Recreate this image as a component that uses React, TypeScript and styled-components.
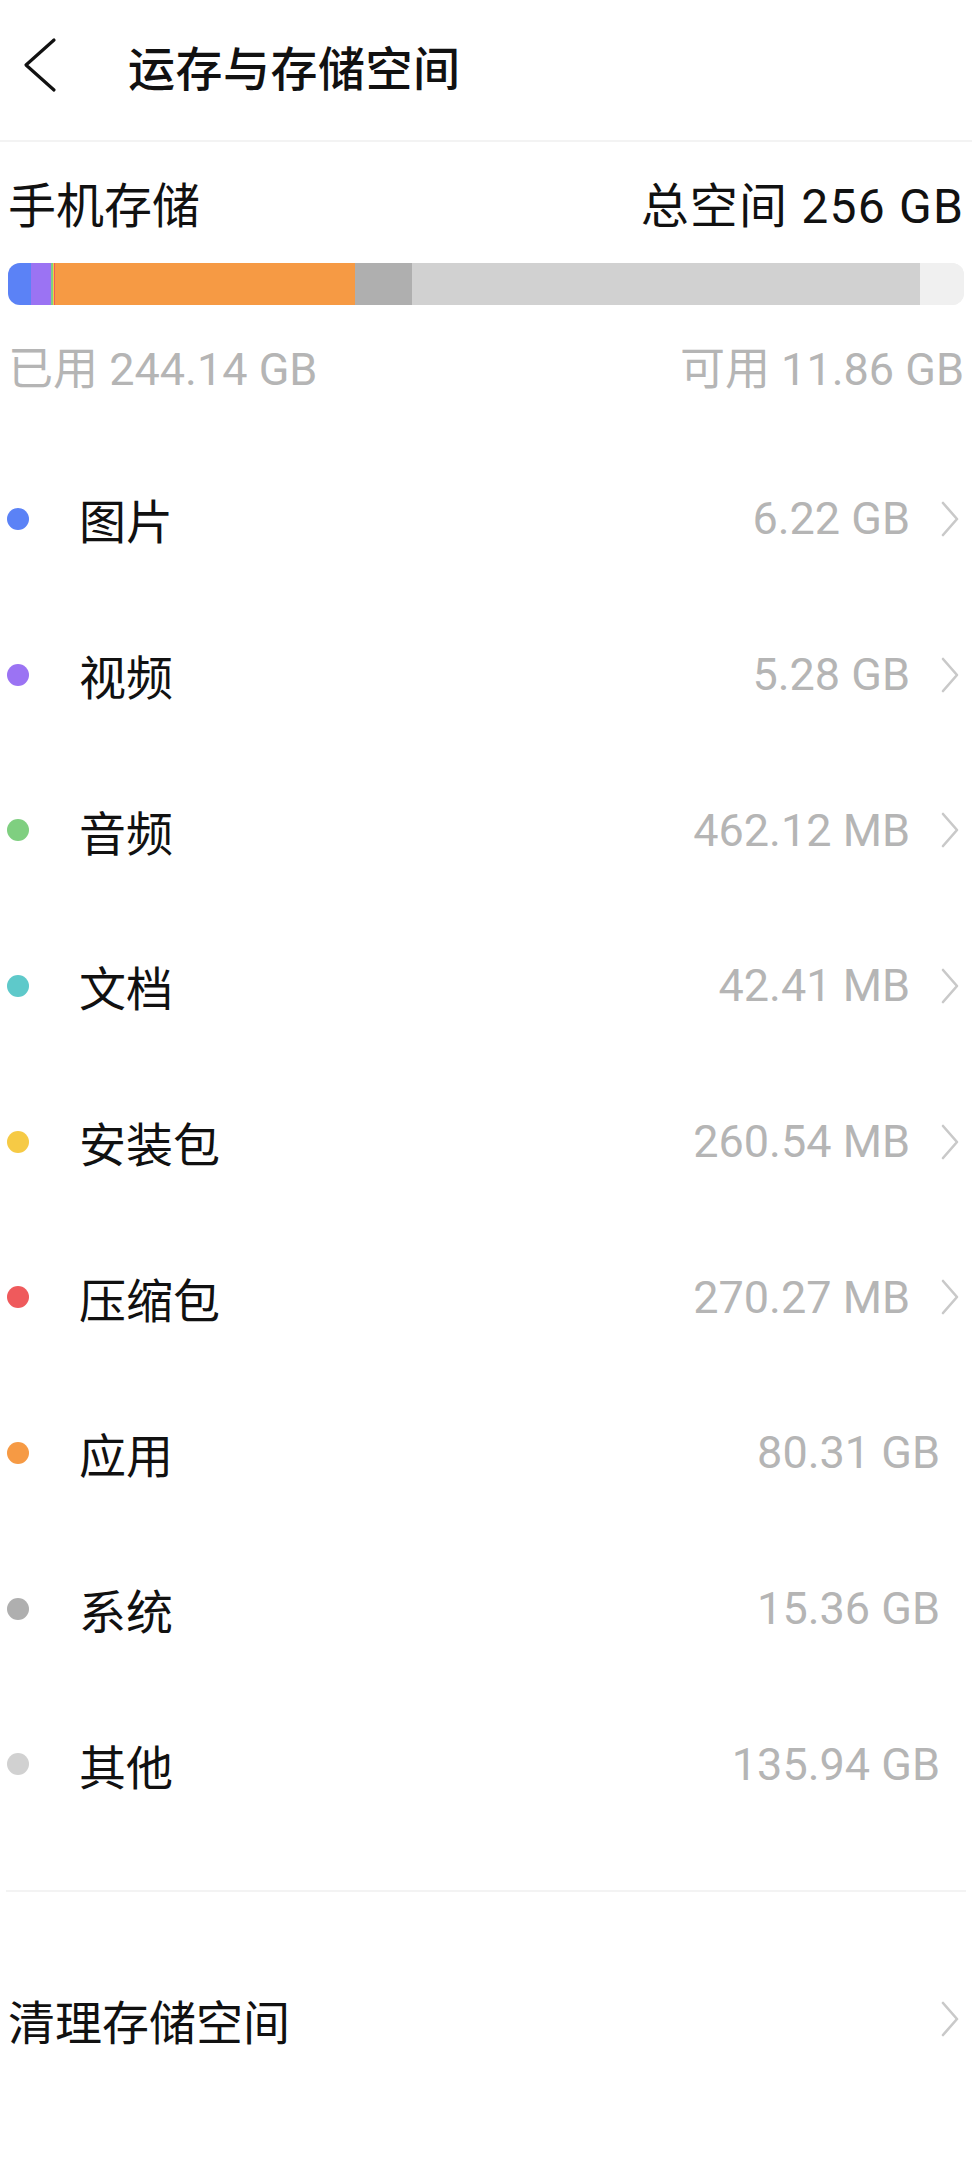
import React from 'react'
import styled, { createGlobalStyle } from 'styled-components'

const GlobalStyle = createGlobalStyle`
  html, body {
    margin: 0;
    padding: 0;
    background: #ffffff;
  }
  body {
    font-family: Roboto, "Noto Sans CJK SC", sans-serif;
    color: #111111;
  }
`

type Category = {
  name: string
  size: string
  gb: number
  color: string
  link: boolean
}

const TOTAL = 256
const FREE = 11.86

const categories: Category[] = [
  { name: '图片', size: '6.22 GB', gb: 6.22, color: '#5b82f6', link: true },
  { name: '视频', size: '5.28 GB', gb: 5.28, color: '#9b73f3', link: true },
  { name: '音频', size: '462.12 MB', gb: 0.46, color: '#7fcf80', link: true },
  { name: '文档', size: '42.41 MB', gb: 0.04, color: '#5ec9ca', link: true },
  { name: '安装包', size: '260.54 MB', gb: 0.26, color: '#f6ca45', link: true },
  { name: '压缩包', size: '270.27 MB', gb: 0.27, color: '#ef5a5c', link: true },
  { name: '应用', size: '80.31 GB', gb: 80.31, color: '#f69a44', link: false },
  { name: '系统', size: '15.36 GB', gb: 15.36, color: '#afafaf', link: false },
  { name: '其他', size: '135.94 GB', gb: 135.94, color: '#d1d1d1', link: false },
]

const BackIcon = () => (
  <svg width="40" height="56" viewBox="0 0 40 56" fill="none">
    <polyline
      points="32,3 4,28 32,53"
      stroke="#111"
      strokeWidth="3.2"
      strokeLinecap="round"
      strokeLinejoin="round"
    />
  </svg>
)

const Chevron = () => (
  <svg width="20" height="38" viewBox="0 0 20 38" fill="none">
    <polyline
      points="3,3 17,19 3,35"
      stroke="#c9c9c9"
      strokeWidth="2.6"
      strokeLinecap="round"
      strokeLinejoin="round"
    />
  </svg>
)

const App: React.FC = () => {
  return (
    <Page>
      <GlobalStyle />
      <Header>
        <BackButton>
          <BackIcon />
        </BackButton>
        <Title>运存与存储空间</Title>
      </Header>

      <Summary>
        <SummaryRow>
          <SummaryLabel>手机存储</SummaryLabel>
          <SummaryLabel $wide>总空间 256 GB</SummaryLabel>
        </SummaryRow>
        <Bar>
          {categories.map(c => (
            <Segment
              key={c.name}
              $color={c.color}
              style={{ width: `${(c.gb / TOTAL) * 100}%` }}
            />
          ))}
          <Segment $color="#f0f0f0" style={{ width: `${(FREE / TOTAL) * 100}%` }} />
        </Bar>
        <UsageRow>
          <span>已用 244.14 GB</span>
          <span>可用 11.86 GB</span>
        </UsageRow>
      </Summary>

      <List>
        {categories.map(c => (
          <Row key={c.name}>
            <Dot $color={c.color} />
            <RowName>{c.name}</RowName>
            <RowValue $link={c.link}>{c.size}</RowValue>
            {c.link && (
              <ChevronSlot>
                <Chevron />
              </ChevronSlot>
            )}
          </Row>
        ))}
      </List>

      <Divider />

      <CleanRow>
        <CleanLabel>清理存储空间</CleanLabel>
        <ChevronSlot>
          <Chevron />
        </ChevronSlot>
      </CleanRow>
    </Page>
  )
}

const Page = styled.div`
  width: 972px;
  min-height: 2160px;
  background: #ffffff;
  display: flex;
  flex-direction: column;
`

const Header = styled.div`
  height: 140px;
  display: flex;
  align-items: center;
  border-bottom: 2px solid #f3f3f3;
`

const BackButton = styled.div`
  width: 128px;
  padding-left: 22px;
  box-sizing: border-box;
  display: flex;
  align-items: center;
  margin-top: -10px;
`

const Title = styled.div`
  font-size: 47px;
  font-weight: 500;
  letter-spacing: 0.5px;
  color: #111;
  margin-top: -10px;
`

const Summary = styled.div`
  padding: 31px 8px 0 8px;
  display: flex;
  flex-direction: column;
`

const SummaryRow = styled.div`
  height: 58px;
  display: flex;
  justify-content: space-between;
  align-items: center;
`

const SummaryLabel = styled.span<{ $wide?: boolean }>`
  font-size: 48px;
  color: #111;
  letter-spacing: ${props => (props.$wide ? '1.2px' : '0')};
`

const Bar = styled.div`
  margin-top: 32px;
  height: 42px;
  border-radius: 12px;
  overflow: hidden;
  display: flex;
  background: #f0f0f0;
`

const Segment = styled.div<{ $color: string }>`
  height: 100%;
  flex-shrink: 0;
  background: ${props => props.$color};
`

const UsageRow = styled.div`
  margin-top: 34px;
  height: 52px;
  display: flex;
  justify-content: space-between;
  align-items: center;
  font-size: 45px;
  color: #b5b5b5;
`

const List = styled.div`
  margin-top: 50px;
  display: flex;
  flex-direction: column;
`

const Row = styled.div`
  height: 155.7px;
  display: flex;
  align-items: center;
  padding: 0 12px 0 7px;
`

const Dot = styled.span<{ $color: string }>`
  width: 22px;
  height: 22px;
  border-radius: 50%;
  background: ${props => props.$color};
  flex-shrink: 0;
`

const RowName = styled.span`
  margin-left: 50px;
  font-size: 47px;
  color: #111;
  flex: 1;
`

const RowValue = styled.span<{ $link: boolean }>`
  font-size: 45px;
  color: #b5b5b5;
  margin-right: ${props => (props.$link ? '30px' : '20px')};
`

const ChevronSlot = styled.span`
  display: flex;
  align-items: center;
  width: 20px;
`

const Divider = styled.div`
  margin: 48px 6px 0 6px;
  height: 2px;
  background: #f3f3f3;
`

const CleanRow = styled.div`
  margin-top: 49px;
  height: 156px;
  display: flex;
  align-items: center;
  justify-content: space-between;
  padding: 0 12px 0 8px;
`

const CleanLabel = styled.span`
  font-size: 47px;
  color: #111;
`

export default App
